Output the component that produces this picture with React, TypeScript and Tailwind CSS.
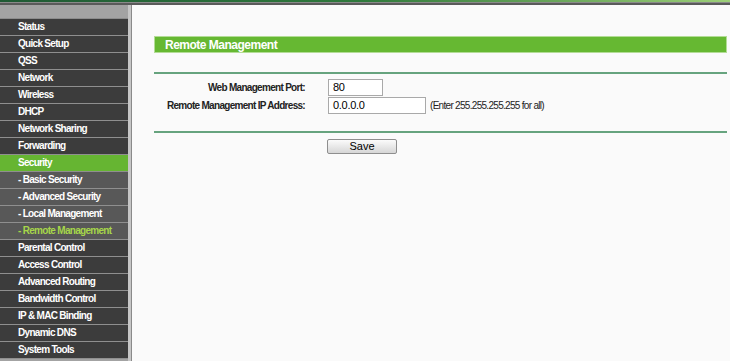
import React from "react";

type MenuItem = {
  label: string;
  kind?: "main" | "sub" | "active" | "current";
};

const menu: MenuItem[] = [
  { label: "Status" },
  { label: "Quick Setup" },
  { label: "QSS" },
  { label: "Network" },
  { label: "Wireless" },
  { label: "DHCP" },
  { label: "Network Sharing" },
  { label: "Forwarding" },
  { label: "Security", kind: "active" },
  { label: "- Basic Security", kind: "sub" },
  { label: "- Advanced Security", kind: "sub" },
  { label: "- Local Management", kind: "sub" },
  { label: "- Remote Management", kind: "current" },
  { label: "Parental Control" },
  { label: "Access Control" },
  { label: "Advanced Routing" },
  { label: "Bandwidth Control" },
  { label: "IP & MAC Binding" },
  { label: "Dynamic DNS" },
  { label: "System Tools" },
];

function rowClass(kind: MenuItem["kind"]) {
  // sub items sit on a lighter grey, the open section is green
  if (kind === "active") return "bg-[#66b532] text-white";
  if (kind === "sub") return "bg-[#585858] text-white";
  if (kind === "current") return "bg-[#585858] text-[#a6d64a]";
  return "bg-[#3c3c3c] text-white";
}

function Sidebar() {
  return (
    <div className="flex w-[128px] flex-col bg-[#a3a3a3]">
      <div className="h-[14px] border-b border-[#8c8c8c]" />
      {menu.map((m) => (
        <div
          key={m.label}
          className={`flex h-[17px] items-center whitespace-nowrap border-b border-[#8f8f8f] pl-[18px] text-[10px] font-bold leading-none tracking-[-0.7px] ${rowClass(m.kind)}`}
        >
          {m.label}
        </div>
      ))}
    </div>
  );
}

function Field({ label, value, width, hint }: { label: string; value: string; width: string; hint?: string }) {
  return (
    <div className="flex h-[17px] items-center">
      <div className="w-[151px] whitespace-nowrap text-right text-[10px] font-bold tracking-[-0.7px] text-[#222]">
        {label}
      </div>
      <div className="w-[23px]" />
      <div
        className={`flex h-[17px] items-center border border-[#a9a9a9] bg-white pl-[4px] text-[11px] tracking-[-0.3px] text-black ${width}`}
      >
        {value}
      </div>
      {hint ? (
        <div className="whitespace-nowrap pl-[4px] text-[10px] tracking-[-0.7px] text-[#222]">{hint}</div>
      ) : null}
    </div>
  );
}

export default function App() {
  return (
    <div
      className="flex h-[361px] w-[730px] flex-col overflow-hidden bg-[#fafafa]"
      style={{ fontFamily: '"Liberation Sans", Arial, sans-serif' }}
    >
      <div className="h-[2px] bg-gradient-to-r from-[#1f5a34] via-[#2f7a3c] to-[#9ccf78]" />
      <div className="h-[1px] bg-[#8a8a8a]" />
      <div className="h-[2px] bg-[#5a5a5a]" />
      <div className="flex flex-1">
        <Sidebar />
        <div className="w-[3px] bg-[#c6c6c6]" />
        <div className="w-[1px] bg-[#8a8a8a]" />
        <div className="flex-1 pl-[22px] pr-[3px] pt-[31px]">
          <div className="flex h-[17px] items-center border border-[#b3dc96] bg-[#66b832] pl-[10px] text-[12px] font-bold tracking-[-0.5px] text-white">
            Remote Management
          </div>
          <div className="mt-[19px] h-[2px] bg-[#66a37e]" />
          <div className="mt-[5px] flex flex-col gap-[1px]">
            <Field label="Web Management Port:" value="80" width="w-[55px]" />
            <Field
              label="Remote Management IP Address:"
              value="0.0.0.0"
              width="w-[98px]"
              hint="(Enter 255.255.255.255 for all)"
            />
          </div>
          <div className="mt-[17px] h-[2px] bg-[#66a37e]" />
          <div className="mt-[6px] flex pl-[173px]">
            <button className="h-[15px] w-[70px] rounded-[2px] border border-[#8e8e8e] bg-gradient-to-b from-[#fbfbfb] to-[#d6d6d6] text-[11px] leading-none text-black">
              Save
            </button>
          </div>
        </div>
      </div>
    </div>
  );
}
